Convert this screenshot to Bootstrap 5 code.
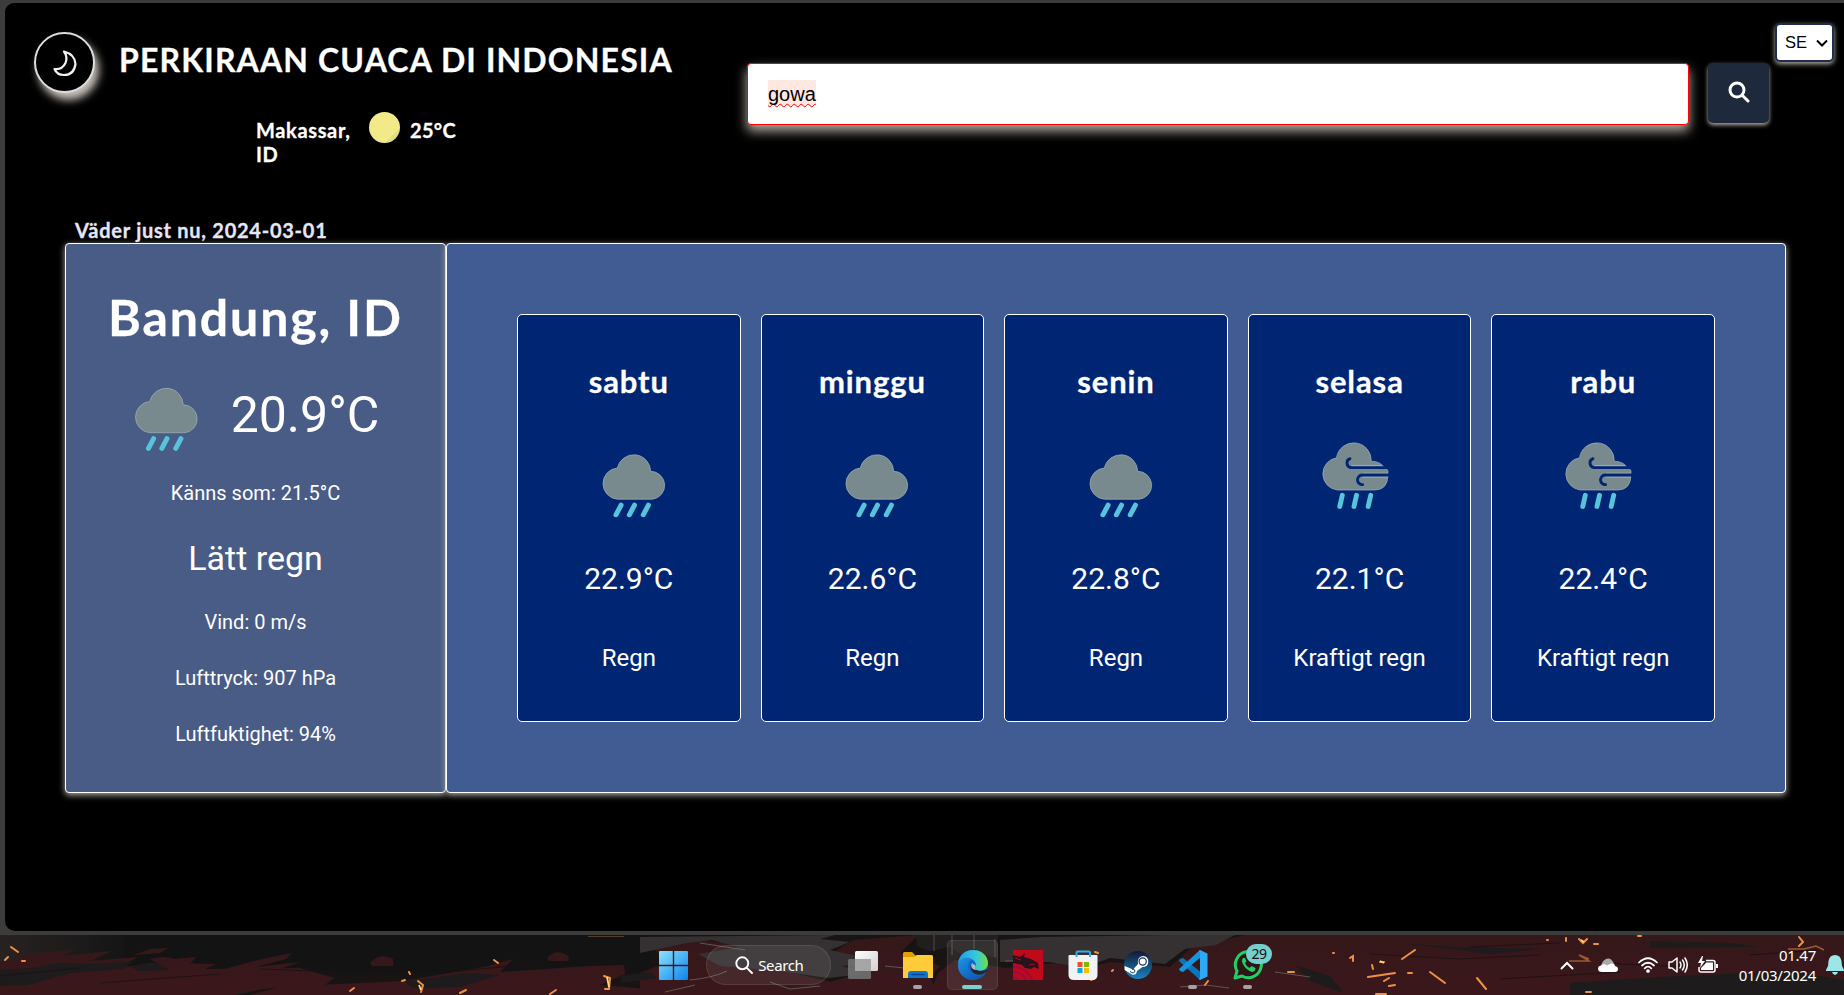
<!DOCTYPE html>
<html lang="sv">
<head>
<meta charset="utf-8">
<title>Perkiraan Cuaca di Indonesia</title>
<link rel="stylesheet" href="https://cdn.jsdelivr.net/npm/bootstrap@5.3.0/dist/css/bootstrap.min.css">
<style>
body{width:1844px;height:995px;overflow:hidden;background:#3c3c3c;font-family:Roboto,"Liberation Sans",sans-serif;color:#fff}
.browser{height:935px;padding:3px 0 4px 5px}
.page{height:928px;background:#000;border-radius:9px 0 0 10px;overflow:hidden}
.round-font{font-family:Lato,"Open Sans",sans-serif;font-weight:700;-webkit-text-stroke:.3px currentColor}
.top{height:217px;padding:0 8px 0 29px}
.brand{width:713px;padding-top:29px}
.moon-btn{width:61px;height:61px;border:2px solid #ddd;box-shadow:4px 7px 9px #c9c3bb;background:#000}
.title{font-size:32px;line-height:40px;letter-spacing:1.14px;margin:8px 0 0 24px}
.mini{margin:17px 0 0 222px;font-size:20px;line-height:24px}
.mini .place{width:113px;padding-top:8px;letter-spacing:.65px}
.mini .deg{padding:8px 0 0 10px;letter-spacing:.3px}
.sun{width:31px;height:31px;margin-top:2px;background:linear-gradient(135deg,#f2ea88 75%,#e5dd84 76%)}
.search{width:942px;height:62px;margin-top:60px;border:1px solid #f00;border-radius:4px;padding:0 20px;background:#fff;color:#000;box-shadow:0 6px 12px #b5aea4;font:20px/60px "Liberation Sans",Arial,sans-serif}
.spell{background:#ffe7e2;padding:3px 0 1px;text-decoration:underline wavy #f00 1px;text-underline-offset:2px;text-decoration-skip-ink:none}
.go{width:61px;height:60px;margin:60px 0 0 19px;padding-bottom:4px!important;background:#1e293b;border-radius:5px;border:0;box-shadow:0 2px 4px #b5aea4}
.lang{width:59px;height:39px;margin:20px 0 0 6px;background:#fff;color:#000;border:2px solid #1e2d50;border-radius:5px;box-shadow:0 2px 5px #b5aea4;font:16.5px/35px "Liberation Sans",Arial,sans-serif;padding:0 4px 0 8px}
.now-label{height:23px;padding-left:70px;font-size:20px;line-height:20px;letter-spacing:.74px;color:#e6e6f6}
.board{margin-left:60px;width:1721px;height:550px}
.pane{border:1px solid #fff;border-radius:4px;box-shadow:0 2px 6px #b5aea4}
.current{width:381px;background:#495c86;padding-top:42.5px;text-align:center;font-size:20px;line-height:28px}
.city{font-size:50px;line-height:60px;letter-spacing:1.9px;margin-bottom:36.5px}
.now{height:68px;margin-bottom:28.4px;gap:31px;padding-left:2px}
.now .t{font-size:50px;line-height:64px}
.desc{font-size:34px;line-height:40px;margin:30.6px 0 30px}
.line{margin-bottom:28px}
.week{width:1340px;background:#415b93;padding:70px;gap:20px}
.day{flex:1 1 0;height:408px;background:#002673;border:1px solid #fff;border-radius:5px;padding-top:46px;text-align:center}
.day .name{font-size:31px;line-height:40px;letter-spacing:.9px;margin-bottom:40.5px}
.day .t{font-size:30px;line-height:40px;margin:37px 0 43px}
.day .d{font-size:24px;line-height:32px}
.taskbar{height:60px;background:#191414;overflow:hidden;font-family:"Noto Sans",sans-serif}
.wall{left:0;top:0}
.items{padding-left:659px}
.pill{width:125px;height:40px;border-radius:20px;background:#ffffff12;border:1px solid #ffffff18;margin:0 4px 0 18px;padding-left:28px;font-size:15px;letter-spacing:-.35px}
.app{width:55px;height:50px}
.app.on::before{content:"";position:absolute;inset:0 2px;border-radius:5px;background:#ffffff16;border:1px solid #ffffff14}
.app i{position:absolute;bottom:1px;left:23px;width:9px;height:4px;border-radius:2px;background:#aaa0a0}
.app.on i{left:17px;width:20px;background:#78d2d2}
.app>svg{position:relative}
.count{left:26px;top:4px;width:26px;height:20px;border-radius:10px;background:#76cfcf;color:#111;font-size:14px;line-height:20px;text-align:center;letter-spacing:-.5px}
.clock{font-size:15px;line-height:20px;width:98px;text-align:right;letter-spacing:-.25px}
</style>
</head>
<body>
<svg width="0" height="0" class="position-absolute">
 <symbol id="rain" viewBox="0 0 64 64"><path d="M15.500 46.300A15.200 15.200 0 0 1 15.300 16A16.400 16.400 0 0 1 47.700 19.200A13.600 13.600 0 0 1 49.300 46.300Z" fill="#788a8d" stroke="#9fb0b5" stroke-width=".7"/><path d="M19 52l-5 9.500M32 52l-5 9.500M45.500 52l-5 9.500" stroke="#58c4dc" stroke-width="4.800" stroke-linecap="round"/></symbol>
 <symbol id="wind" viewBox="0 0 68 68"><path d="M16 48.300A16 16 0 0 1 15.300 16.600A17.200 17.200 0 0 1 49.500 20Q57 20 61 24.500L66 29V34Q65.500 48.300 53 48.300Z" fill="#788a8d" stroke="#9fb0b5" stroke-width=".7"/><path d="M60 24.500H30M66 31.700H41M66 35.500H41" stroke="#a9b8bf" stroke-width="1"/><path d="M67.500 26.200H29.500A4.600 4.600 0 0 1 28.500 17.400M67.500 33.500H40.500A4.600 4.600 0 0 0 41 43" fill="none" stroke="#002673" stroke-width="2.800" stroke-linecap="round"/><path d="M21 53.500l-2.500 11M35 53.500l-2.500 11M49 53.500l-2.500 11" stroke="#58c4dc" stroke-width="4.800" stroke-linecap="round"/></symbol>
</svg>
<div class="browser"><main class="page">
 <header class="top d-flex align-items-start">
  <div class="brand">
   <div class="d-flex align-items-start">
    <button class="moon-btn rounded-circle p-0 d-flex align-items-center justify-content-center"><svg width="26" height="28" viewBox="0 0 26 28" fill="none" stroke="#f2f2f2" stroke-width="2.200" stroke-linejoin="round"><path d="M12 2.500Q23 5.500 23.500 15Q22 26 12 26Q5 26 2.500 20Q10 21 13.500 14Q16 8 12 2.500Z"/></svg></button>
    <h1 class="title round-font text-nowrap mb-0">PERKIRAAN CUACA DI INDONESIA</h1>
   </div>
   <div class="mini d-flex align-items-start round-font"><div class="place">Makassar,<br>ID</div><div class="sun rounded-circle"></div><div class="deg">25°C</div></div>
  </div>
  <div class="search flex-shrink-0"><span class="spell">gowa</span></div>
  <button class="go p-0 flex-shrink-0"><svg width="22" height="22" viewBox="0 0 22 22" fill="none" stroke="#fff" stroke-width="3" stroke-linecap="round"><circle cx="9" cy="9" r="7"/><path d="M14.200 14.200L20 20"/></svg></button>
  <div class="lang d-flex align-items-center justify-content-between flex-shrink-0"><span>SE</span><svg width="12" height="8" viewBox="0 0 12 8" fill="none" stroke="#000" stroke-width="2"><path d="M1 1.500l5 5 5-5"/></svg></div>
 </header>
 <div class="now-label round-font">Väder just nu, 2024-03-01</div>
 <div class="board d-flex">
  <section class="pane current flex-shrink-0">
   <div class="city round-font">Bandung, ID</div>
   <div class="now d-flex justify-content-center"><svg width="66" height="66" class="align-self-end"><use href="#rain"/></svg><div class="t">20.9°C</div></div>
   <div>Känns som: 21.5°C</div>
   <div class="desc">Lätt regn</div>
   <div class="line">Vind: 0 m/s</div><div class="line">Lufttryck: 907 hPa</div><div class="line">Luftfuktighet: 94%</div>
  </section>
  <section class="pane week d-flex flex-shrink-0">
   <article class="day"><div class="name round-font">sabtu</div><svg class="d-block mx-auto" width="80" height="80"><use href="#rain" x="12.500" y="9.500" width="66" height="66"/></svg><div class="t">22.9°C</div><div class="d">Regn</div></article>
   <article class="day"><div class="name round-font">minggu</div><svg class="d-block mx-auto" width="80" height="80"><use href="#rain" x="12.500" y="9.500" width="66" height="66"/></svg><div class="t">22.6°C</div><div class="d">Regn</div></article>
   <article class="day"><div class="name round-font">senin</div><svg class="d-block mx-auto" width="80" height="80"><use href="#rain" x="12.500" y="9.500" width="66" height="66"/></svg><div class="t">22.8°C</div><div class="d">Regn</div></article>
   <article class="day"><div class="name round-font">selasa</div><svg class="d-block mx-auto" width="80" height="80"><use href="#wind" x="1" y="-1" width="69" height="69"/></svg><div class="t">22.1°C</div><div class="d">Kraftigt regn</div></article>
   <article class="day"><div class="name round-font">rabu</div><svg class="d-block mx-auto" width="80" height="80"><use href="#wind" x="1" y="-1" width="69" height="69"/></svg><div class="t">22.4°C</div><div class="d">Kraftigt regn</div></article>
  </section>
 </div>
</main></div>
<footer class="taskbar position-relative">
 <svg class="wall position-absolute" width="1844" height="60" viewBox="0 0 1844 60">
  <defs><linearGradient id="rock" x2="0" y2="1"><stop stop-color="#351819"/><stop offset="1" stop-color="#3b171b"/></linearGradient><linearGradient id="haze"><stop stop-color="#292222"/><stop offset="1" stop-color="#151515"/></linearGradient></defs>
  <path d="M0 0H124V30H0Z" fill="url(#haze)"/><path d="M124 0H650V38H124Z" fill="#131313"/>
  <g fill="url(#rock)">
   <path d="M0 28L26 20 46 17 76 14 60 21 112 16 90 26 138 22 120 32 160 28 216 29 205 34 300 33 334 43 325 50 262 54 235 60H0Z"/>
   <path d="M134 20L150 14 168 13 160 18ZM150 24Q165 20 174 24L196 22 190 29 160 29ZM225 34L262 24 292 18 286 24 255 32 300 27 280 34ZM370 28Q380 17 393 24V31L372 31ZM547 23Q558 12 569 22L568 26H549ZM250 60L280 52 340 49 405 46 438 40 484 32 513 24 500 37 590 31 624 30 625 39 600 50 660 55V60Z"/>
   <path d="M640 60V38L668 27 655 15 690 4 742 10 705 18 720 27 776 34 831 47 860 38 842 31 880 26 832 18 854 5 918 0 900 18 940 31 930 43 940 60Z"/>
   <path d="M930 60L938 38 955 25 1005 33 1057 28 1083 34 1110 27 1170 32 1190 14 1245 0H1844V60Z"/>
  </g>
  <path d="M640 2L835 0 820 4 850 7 830 15 880 26 842 31 865 39 828 43 780 36 720 31 698 19 738 12 712 5 687 8 640 18ZM1000 5L1040 2 1170 0H1235L1216 10 1185 14 1165 29 1110 23 1083 33 1050 27 1000 27Z" fill="#353132"/>
  <path d="M0 35L30 33 60 28 90 29 132 27 123 34 70 38 28 50 0 51ZM128 31L155 27 170 35 140 36ZM405 47L466 38 500 40 460 52 413 53ZM620 41L650 37 657 43 622 48ZM1295 30L1330 41 1344 58 1310 46ZM1570 48L1660 42 1790 36 1844 45V60H1570ZM1400 8L1455 12 1540 14 1490 19ZM1650 6L1730 8 1760 12 1650 13Z" fill="#1d1b1c"/>
  <path d="M690 45Q712 43 727 36M665 57L695 50M770 47L790 54 820 51M885 31L923 35M1180 52L1206 50 1229 53M700 8L745 15M1005 26L1040 25M1275 37L1310 42" stroke="#5c5658" fill="none"/>
  <path d="M0 41L80 33M100 48L220 39M260 34L340 37M450 37L540 28M1370 19L1460 24 1540 20M1500 44L1620 37M1470 12L1560 8M1750 20L1820 15M1600 28L1690 32" stroke="#211113" fill="none"/>
  <path d="M915 0H998V24L985 20 975 14 962 20 950 12 930 16 918 12Z" fill="#211e1e"/><path d="M934 0V16M952 0V20M974 0V14M995 4V22" stroke="#423d3b" stroke-width="1.500"/>
  <g stroke="#ef9142" stroke-linecap="round" fill="none" stroke-width="2"><path d="M11 12L18 17M5 25L8 22M22 26h3M494 25l4 3M409 37l1 2M402 46l3-1M418 46l5 4-2 7M350 56l4-3M460 58l6-3M550 59l6-4M604 41l6 2-1 11-4 0M1095 17l3 1M1112 36l1-1M1091 45l4-2M1205 50l3-4M1333 18h1M1350 23l3-2v5M1372 30l1 4M1380 27l4 0M1402 24l13-9M1288 37h6M1368 42l27-4M1384 46l5-3M1389 51l6-1M1408 38h4M1430 37l15 11M1477 43l9 11M1376 59h10M1566 3v3M1579 4l4 4 4-4M1547 5h1M1594 9h4M1799 2l4 5-4 4M1586 57h5M1638 1h3"/></g>
  <path d="M1569 26h20l-10-6 10 4M1788 14h16l12-3 8 4" stroke="#9b5a36" stroke-width="1.500" fill="none"/>
  <path d="M1380 26l4 2M1581 5l3 2M607 42l2 10M419 50l2 5" stroke="#ffd77a" stroke-width="1.800"/>
  <path d="M588 1.500h36" stroke="#9b6a45" opacity=".5"/>
 </svg>
 <div class="items position-relative d-flex align-items-center h-100">
  <svg width="29" height="29" viewBox="0 0 29 29"><defs><linearGradient id="w" x2="1" y2="1"><stop stop-color="#8be3ff"/><stop offset="1" stop-color="#0a84ec"/></linearGradient></defs><path d="M0 1Q0 0 1 0H13.800V13.800H0ZM15.200 0H28Q29 0 29 1V13.800H15.200ZM0 15.200H13.800V29H1Q0 29 0 28ZM15.200 15.200H29V28Q29 29 28 29H15.200Z" fill="url(#w)"/></svg>
  <div class="pill d-flex align-items-center"><svg width="18" height="18" viewBox="0 0 18 18" fill="none" stroke="#fff" stroke-width="1.900" stroke-linecap="round"><circle cx="7.300" cy="7.300" r="6"/><path d="M11.800 11.800L17 17"/></svg><span class="ms-1 ps-0">&hairsp;Search</span></div>
  <div class="app position-relative d-flex align-items-center justify-content-center"><svg width="30" height="28" viewBox="0 0 30 28"><defs><linearGradient id="tv" x2="1" y2="1"><stop stop-color="#fff"/><stop offset="1" stop-color="#cfcfcf"/></linearGradient></defs><rect x="7" width="23" height="20" rx="1.500" fill="url(#tv)"/><rect y="8" width="23" height="20" rx="1.500" fill="#777" opacity=".85"/><path d="M7 8H23V20H7Z" fill="#a6a6a6"/></svg></div>
  <div class="app position-relative d-flex align-items-center justify-content-center"><svg width="30" height="28" viewBox="0 0 30 28"><path d="M0 2.500Q0 1 1.500 1H9L12.500 4.500H17V10H0Z" fill="#e5a000"/><path d="M0 6H11L14 4H28.500Q30 4 30 5.500V27H0Z" fill="#ffcb3a"/><path d="M5 27V23Q5 20 8 20H22Q25 20 25 23V27Z" fill="#0f76d0"/><path d="M9 23.500H21" stroke="#07438c" stroke-width="1.500" stroke-linecap="round"/></svg><i></i></div>
  <div class="app on position-relative d-flex align-items-center justify-content-center"><svg width="30" height="30" viewBox="0 0 30 30"><defs><linearGradient id="e1"><stop stop-color="#249be6"/><stop offset=".6" stop-color="#35c8dd"/><stop offset="1" stop-color="#70df45"/></linearGradient><linearGradient id="e2" x2="1" y2="1"><stop stop-color="#1e93e4"/><stop offset="1" stop-color="#0d4ca8"/></linearGradient></defs><circle cx="15" cy="15" r="15" fill="#1069c4"/><path d="M0 14C1 5 7 0 15 0C24 0 30 6 30 13C30 18 26 20.500 22 20.500C18 20.500 16.500 19 17.500 17C19 14 17 10 12 8.500C7 7.500 2 10 0 14Z" fill="url(#e1)"/><path d="M0 15C2 8 9 6 14 9.500C10 11 9 17 11 21C14 26 21 27 27 23.500C23 29 18 31 11 29.400C4 27 0 22 0 15Z" fill="url(#e2)"/><path d="M14 13C11 17 13 23 19 24.500C23 25 26 24 28 22L29 21.500 30 19 28 20C24 22 18 21 16.500 18.500C18 17 17 14 14 13Z" fill="#2b2324"/><path d="M14 13C12 16 14 20 18 20C16.500 18.500 18 17 17.500 15.500Z" fill="#abc"/></svg><i></i></div>
  <div class="app position-relative d-flex align-items-center justify-content-center"><svg width="30" height="30" viewBox="0 0 30 30"><path fill="#c00a1b" d="M0 0H30V30H0Z"/><path d="M0 5L7 7 12 3 11 7 18 9 25 13 26 19 21 17 18 19 12 18 9 15 0 13Z" fill="#26131c"/><path d="M0 17Q11 16 20 30M0 22Q9 22 13 30M0 27L6 30" stroke="#9c0b3c" stroke-width="2" fill="none"/><path d="M2 8l6 2M16 15l6-1" stroke="#a80d1d" fill="none"/></svg></div>
  <div class="app position-relative d-flex align-items-center justify-content-center"><svg width="30" height="30" viewBox="0 0 30 30"><path d="M.5 6Q.5 5 1.500 5H28.500Q29.500 5 29.500 6V25Q29.500 30 24 30H6Q.5 30 .5 25Z" fill="#f1f2f3"/><path d="M8.500 7V3Q8.500 1.500 10 1.500H20.500Q22 1.500 22 3V7" fill="none" stroke="#38aee6" stroke-width="2"/><path d="M9.500 12h5v5h-5z" fill="#f25022"/><path d="M16 12h5v5h-5z" fill="#7fba00"/><path d="M9.500 18h5v5h-5z" fill="#00a4ef"/><path d="M16 18h5v5h-5z" fill="#ffb900"/></svg></div>
  <div class="app position-relative d-flex align-items-center justify-content-center"><svg width="28" height="28" viewBox="0 0 28 28"><defs><linearGradient id="st" x2="0" y2="1"><stop stop-color="#141838"/><stop offset="1" stop-color="#1784bd"/></linearGradient></defs><circle cx="14" cy="14" r="14" fill="url(#st)"/><path d="M.6 15L9 18.500 14 13Q13 5.500 19 5Q24.500 5.500 24.300 11Q24 16 18.500 16L13 20Q12 25 8 23.500L.6 19Z" fill="#fff"/><circle cx="18.700" cy="10.500" r="3.600" fill="#fff" stroke="#17335c" stroke-width="1.200"/><path d="M6 20.500Q10 23.500 11 20Q10.500 17.500 8 18" stroke="#17335c" fill="none"/></svg></div>
  <div class="app position-relative d-flex align-items-center justify-content-center"><svg width="30" height="30" viewBox="0 0 30 30"><path d="M2 9L5 8 24 23 22 30 1 11Z" fill="#0877b9"/><path d="M2 21L5 22 23 7 22 0 1 19Z" fill="#1595df"/><path d="M22 0L29.500 3.500V26.500L22 30 20.500 28.500Q22 29 22 27V3Q22 1 20.500 1.500Z" fill="#2fa9f2"/></svg><i></i></div>
  <div class="app position-relative d-flex align-items-center justify-content-center"><svg width="30" height="30" viewBox="0 0 30 30"><path d="M2 28L4 21A13 13 0 1 1 9 26Z" fill="#2b1718" stroke="#22ce66" stroke-width="3" stroke-linejoin="round"/><path d="M10 8Q8 11 10 14Q13 20 19 22Q22 22 22.500 18L18.500 16 16.500 18Q13 16 12 13L13.500 11.500 12 8Z" fill="#22ce66"/></svg><span class="count position-absolute">29</span><i></i></div>
  <div class="d-flex align-items-center ms-auto h-100">
   <svg width="14" height="9" viewBox="0 0 14 9" fill="none" stroke="#fff" stroke-width="2" stroke-linecap="round"><path d="M1.500 7.500L7 2l5.500 5.500"/></svg>
   <svg class="ms-4" width="20" height="14" viewBox="0 0 20 14"><path d="M3 8Q4 3 8 1Q13-1 16 6L8 12Z" fill="#aaa"/><path d="M4 14Q0 14 0 10.500Q0 8 3 7.500Q6 5 9 7.500L13 5.500Q17 5 17 8Q20 8.500 20 11Q20 14 17 14Z" fill="#fff"/></svg>
   <div class="d-flex align-items-center ms-3 ps-1" style="gap:10px">
   <svg width="20" height="16" viewBox="0 0 20 16" fill="none" stroke="#fff" stroke-width="1.700" stroke-linecap="round"><path d="M1 5.500Q10-3 19 5.500M4 8.500Q10 3 16 8.500M6.700 11.300Q10 8 13.300 11.300"/><circle cx="10" cy="14" r="1" fill="#fff"/></svg>
   <svg width="20" height="18" viewBox="0 0 20 18" fill="none" stroke="#fff" stroke-width="1.500" stroke-linecap="round" stroke-linejoin="round"><path d="M1 6H4L9 2V16L4 12H1ZM12 6Q14 9 12 12M14.500 4Q18 9 14.500 14M17 2Q21.500 9 17 16"/></svg>
   <svg width="20" height="18" viewBox="0 0 20 18"><path d="M8 4.500H15Q17 4.500 17 6.500V14Q17 16 15 16H3Q1 16 1 14V11" fill="none" stroke="#fff" stroke-width="1.500"/><path d="M8 6.500H15V14H3V12L7 8ZM18 8h2v4h-2zM4 0L0 7H3L2 12 7 5H4L5 0Z" fill="#fff"/></svg>
   </div>
   <div class="clock">01.47<br>01/03/2024</div>
   <svg style="margin-left:10px" width="18" height="20" viewBox="0 0 18 20"><path d="M9 0Q14.500 0 15.500 6L16 11 18 15V16H0V15L2 11 2.500 6Q3.500 0 9 0ZM6 17H12Q11 20 9 20Q7 20 6 17Z" fill="#9be6e6"/></svg>
  </div>
 </div>
</footer>
<script src="https://cdn.jsdelivr.net/npm/bootstrap@5.3.0/dist/js/bootstrap.bundle.min.js"></script>
</body>
</html>
